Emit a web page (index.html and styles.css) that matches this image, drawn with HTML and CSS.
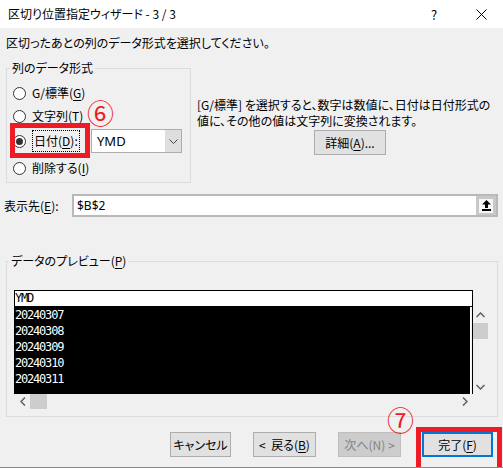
FILE: index.html
```html
<!DOCTYPE html>
<html lang="ja">
<head>
  <meta charset="UTF-8" />
  <title>区切り位置指定ウィザード - 3 / 3</title>
  <link rel="stylesheet" href="styles.css">
</head>
<body>
  <div class="window">
    <div class="titlebar">
      <span class="title">区切り位置指定ウィザード - 3 / 3</span>
      <span class="help">?</span>
      <span class="close">
        <svg width="11" height="11" viewBox="0 0 11 11"><path d="M0.5 0.5 L10.5 10.5 M10.5 0.5 L0.5 10.5" stroke="#000" stroke-width="1" fill="none"/></svg>
      </span>
    </div>

    <div class="content">
      <p class="lead">区切ったあとの列のデータ形式を選択してください。</p>

      <div class="format-row">
        <fieldset class="group format">
          <legend>列のデータ形式</legend>
          <label class="radio r1"><span class="dot"></span>G/標準(<u>G</u>)</label>
          <label class="radio r2"><span class="dot"></span>文字列(<u>T</u>)</label>
          <div class="radio-date">
            <label class="radio checked"><span class="dot"></span><span class="focus">日付(<u>D</u>):</span></label>
            <div class="combo">
              <span class="combo-text">YMD</span>
              <span class="combo-btn">
                <svg width="9" height="5" viewBox="0 0 9 5"><path d="M0.5 0.5 L4.5 4.5 L8.5 0.5" stroke="#444" fill="none"/></svg>
              </span>
            </div>
          </div>
          <label class="radio r4"><span class="dot"></span>削除する(<u>I</u>)</label>
        </fieldset>

        <div class="note">
          <p>[G/標準] を選択すると、数字は数値に、日付は日付形式の<br>値に、その他の値は文字列に変換されます。</p>
          <button class="btn detail">詳細(<u>A</u>)...</button>
        </div>
      </div>

      <div class="dest">
        <span class="dest-label">表示先(<u>E</u>):</span>
        <div class="ref-input">
          <span class="ref-text">$B$2</span>
          <span class="ref-btn">
            <span class="ref-face">
              <svg width="9" height="11" viewBox="0 0 9 11"><path d="M4.5 0 L9 4.5 L6 4.5 L6 8 L3 8 L3 4.5 L0 4.5 Z M0 9 H9 V11 H0 Z" fill="#000"/></svg>
            </span>
          </span>
        </div>
      </div>

      <fieldset class="group preview">
        <legend>データのプレビュー(<u>P</u>)</legend>
        <div class="preview-body">
          <div class="grid">
            <div class="grid-head">YMD</div>
            <div class="grid-rows">
              <div>20240307</div>
              <div>20240308</div>
              <div>20240309</div>
              <div>20240310</div>
              <div>20240311</div>
            </div>
          </div>
          <div class="vscroll">
            <svg class="arrow" width="9" height="6" viewBox="0 0 9 6"><path d="M0.5 5 L4.5 1 L8.5 5" stroke="#606060" stroke-width="1.5" fill="none"/></svg>
            <div class="vthumb"></div>
            <div class="spacer"></div>
            <svg class="arrow" width="9" height="6" viewBox="0 0 9 6"><path d="M0.5 1 L4.5 5 L8.5 1" stroke="#606060" stroke-width="1.5" fill="none"/></svg>
          </div>
        </div>
        <div class="hscroll">
          <svg class="arrow" width="6" height="9" viewBox="0 0 6 9"><path d="M5 0.5 L1 4.5 L5 8.5" stroke="#606060" stroke-width="1.5" fill="none"/></svg>
          <div class="hthumb"></div>
          <div class="spacer"></div>
          <svg class="arrow" width="6" height="9" viewBox="0 0 6 9"><path d="M1 0.5 L5 4.5 L1 8.5" stroke="#606060" stroke-width="1.5" fill="none"/></svg>
        </div>
      </fieldset>

      <div class="actions">
        <button class="btn cancel">キャンセル</button>
        <button class="btn back">&lt;&nbsp; 戻る(<u>B</u>)</button>
        <button class="btn next" disabled>次へ(N) &gt;</button>
        <button class="btn finish">完了(<u>F</u>)</button>
      </div>
    </div>

    <!-- step markers -->
    <div class="mark box-date"></div>
    <div class="mark box-finish"></div>
    <span class="step step6">⑥</span>
    <span class="step step7">⑦</span>
  </div>
</body>
</html>
```

FILE: styles.css
```css
* {
  box-sizing: border-box;
}

body {
  margin: 0;
  font-family: "Noto Sans CJK JP", "Noto Sans", sans-serif;
  font-size: 12px;
  color: #000;
  background: #f0f0f0;
}

.window {
  position: relative;
  width: 503px;
  height: 468px;
  overflow: hidden;
  background: #f0f0f0;
  border-bottom: 1px solid #8a8a8a;
  font-feature-settings: "palt";
}

u {
  text-decoration: underline;
  text-underline-offset: 2px;
}

/* title bar */
.titlebar {
  height: 28px;
  background: #fff;
  display: flex;
  align-items: center;
  padding-left: 8px;
}

.title {
  flex: 1;
  line-height: 16px;
}

.help {
  width: 16px;
  text-align: center;
  font-size: 13px;
  margin-right: 34px;
}

.close {
  width: 11px;
  height: 11px;
  margin-right: 16px;
  display: flex;
}

.lead {
  margin: 7px 0 0 6px;
  line-height: 16px;
}

/* group boxes */
.group {
  border: 1px solid #dcdcdc;
  margin: 0;
  min-width: 0;
}

.group legend {
  line-height: 16px;
  padding: 0 2px;
}

.format-row {
  display: flex;
  margin-top: 9px;
}

.format {
  margin-left: 6px;
  width: 185px;
  height: 123px;
  padding: 7px 0 0 6px;
}

.format legend {
  margin-left: -3px;
}

.radio {
  display: flex;
  align-items: center;
  height: 20px;
  line-height: 16px;
}

.r2 {
  margin-top: 3px;
}

.r4 {
  margin-top: 5px;
}

.dot {
  width: 13px;
  height: 13px;
  border: 1px solid #333;
  border-radius: 50%;
  background: #fff;
  margin-right: 6px;
  display: flex;
  align-items: center;
  justify-content: center;
}

.checked .dot::after {
  content: "";
  width: 7px;
  height: 7px;
  border-radius: 50%;
  background: #333;
}

.radio-date {
  display: flex;
  align-items: center;
  height: 24px;
  margin-top: 3px;
}

.radio-date .radio {
  width: 78px;
}

.focus {
  border: 1px dotted #000;
  padding: 2px 1px;
  line-height: 16px;
}

.combo {
  display: flex;
  width: 91px;
  height: 24px;
  border: 1px solid #adadad;
  background: #fff;
}

.combo-text {
  flex: 1;
  padding-left: 5px;
  line-height: 22px;
  font-family: "Noto Sans", sans-serif;
  font-size: 13px;
}

.combo-btn {
  width: 16px;
  background: #dedede;
  display: flex;
  align-items: center;
  justify-content: center;
}

.note {
  flex: 1;
  padding: 37px 0 0 6px;
  display: flex;
  flex-direction: column;
  align-items: center;
}

.note p {
  margin: 0;
  align-self: flex-start;
  line-height: 16px;
}

/* buttons */
.btn {
  font: inherit;
  height: 25px;
  background: #e1e1e1;
  border: 1px solid #adadad;
  color: #000;
  padding: 0;
  line-height: 16px;
}

.detail {
  width: 72px;
  margin-top: 1px;
}

/* destination */
.dest {
  display: flex;
  align-items: center;
  margin-top: 11px;
  padding-left: 4px;
}

.dest-label {
  width: 68px;
  line-height: 16px;
}

.ref-input {
  display: flex;
  width: 426px;
  height: 23px;
  border: 2px solid #b9b9b9;
  background: #fff;
}

.ref-text {
  flex: 1;
  padding-left: 3px;
  line-height: 19px;
  font-family: "Noto Sans", sans-serif;
  font-size: 12px;
}

.ref-btn {
  width: 20px;
  background: #c8c8c8;
  display: flex;
  align-items: center;
  justify-content: center;
}

.ref-face {
  width: 14px;
  height: 14px;
  background: #f6f6f6;
  display: flex;
  align-items: center;
  justify-content: center;
}

/* preview */
.preview {
  margin: 36px 0 0 6px;
  width: 492px;
  height: 164px;
  padding: 21px 0 0 7px;
}

.preview legend {
  margin-left: -5px;
}

.preview-body {
  display: flex;
}

.grid {
  width: 459px;
  border: 1px solid #000;
  border-bottom: none;
  font-family: "DejaVu Sans Mono", monospace;
  font-size: 12px;
  letter-spacing: -1.2px;
}

.grid-head {
  height: 16px;
  line-height: 15px;
  background: #fff;
  border-bottom: 1px solid #000;
}

.grid-rows {
  background: #000;
  color: #fff;
  height: 87px;
  border-right: 1px solid #fff;
  margin-right: 1px;
}

.grid-rows div {
  height: 16px;
  line-height: 16px;
}

.vscroll {
  width: 15px;
  margin-top: 17px;
  display: flex;
  flex-direction: column;
  align-items: center;
  padding: 5px 0 4px;
}

.vthumb {
  width: 15px;
  height: 16px;
  margin-top: 5px;
  background: #cdcdcd;
}

.spacer {
  flex: 1;
}

.hscroll {
  width: 459px;
  height: 15px;
  display: flex;
  align-items: center;
  padding: 0 5px 0 6px;
}

.hthumb {
  width: 17px;
  height: 15px;
  margin-left: 4px;
  background: #cdcdcd;
}

/* bottom buttons */
.actions {
  display: flex;
  justify-content: flex-end;
  gap: 22px;
  margin-top: 15px;
  padding-right: 10px;
}

.cancel {
  width: 61px;
}

.back {
  width: 63px;
}

.next {
  width: 63px;
  background: #cccccc;
  border-color: #bfbfbf;
  color: #838383;
}

.finish {
  width: 71px;
  border: 1px solid #0078d7;
  box-shadow: inset 0 0 0 1px #0078d7;
  margin-left: -1px;
}

/* red step markers */
.mark {
  position: absolute;
  border: 5px solid #ed1c24;
}

.box-date {
  left: 10px;
  top: 123px;
  width: 80px;
  height: 35px;
}

.box-finish {
  left: 416px;
  top: 427px;
  width: 86px;
  height: 60px;
}

.step {
  position: absolute;
  color: #ed1c24;
  font-size: 27px;
  line-height: 27px;
}

.step6 {
  left: 87px;
  top: 99px;
}

.step7 {
  left: 387px;
  top: 406px;
}
```
